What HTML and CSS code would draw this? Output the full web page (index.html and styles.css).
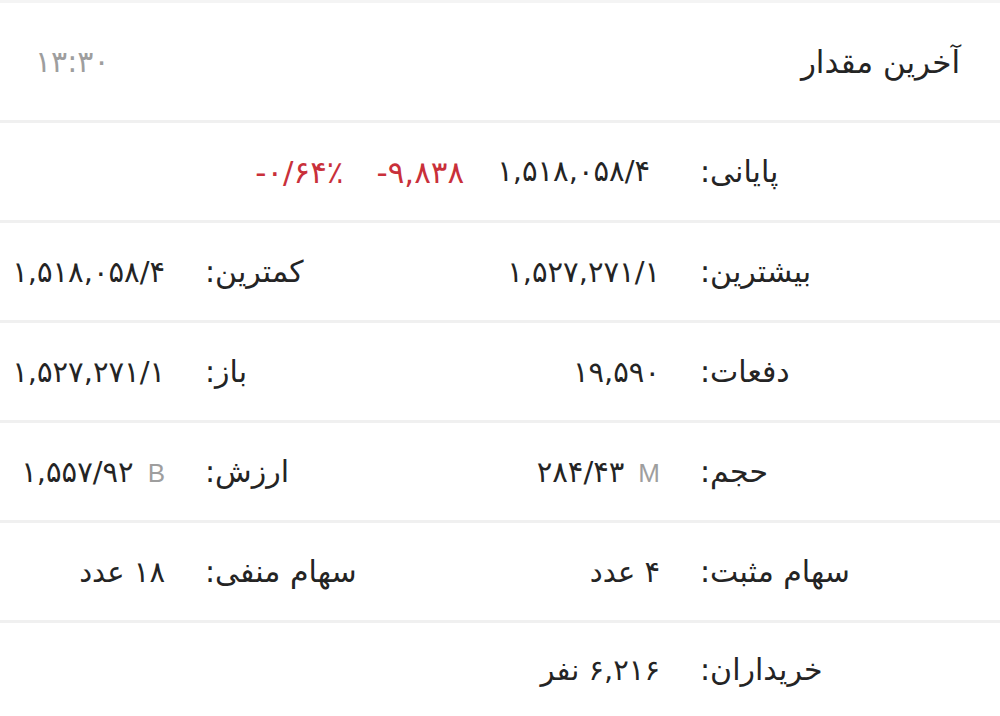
FILE: index.html
```html
<!DOCTYPE html>
<html lang="fa" dir="rtl">
<head>
<meta charset="utf-8">
<link rel="stylesheet" href="styles.css">
</head>
<body>
<div class="card">
  <div class="header">
    <span class="title">آخرین مقدار</span>
    <span class="time num">۱۳:۳۰</span>
  </div>
  <div class="row">
    <span class="label">پایانی:</span>
    <span class="value wide">
      <span class="num">۱,۵۱۸,۰۵۸/۴</span>
      <span class="num red">-۹,۸۳۸</span>
      <span class="num red">-۰/۶۴٪</span>
    </span>
  </div>
  <div class="row">
    <span class="label">بیشترین:</span>
    <span class="value"><span class="num">۱,۵۲۷,۲۷۱/۱</span></span>
    <span class="label">کمترین:</span>
    <span class="value"><span class="num">۱,۵۱۸,۰۵۸/۴</span></span>
  </div>
  <div class="row">
    <span class="label">دفعات:</span>
    <span class="value"><span class="num">۱۹,۵۹۰</span></span>
    <span class="label">باز:</span>
    <span class="value"><span class="num">۱,۵۲۷,۲۷۱/۱</span></span>
  </div>
  <div class="row">
    <span class="label">حجم:</span>
    <span class="value"><span class="num">۲۸۴/۴۳<span class="unit">M</span></span></span>
    <span class="label">ارزش:</span>
    <span class="value"><span class="num">۱,۵۵۷/۹۲<span class="unit">B</span></span></span>
  </div>
  <div class="row">
    <span class="label">سهام مثبت:</span>
    <span class="value">۴ عدد</span>
    <span class="label">سهام منفی:</span>
    <span class="value">۱۸ عدد</span>
  </div>
  <div class="row last">
    <span class="label">خریداران:</span>
    <span class="value">۶,۲۱۶ نفر</span>
  </div>
</div>
</body>
</html>
```

FILE: styles.css
```css
html, body {
  margin: 0;
  padding: 0;
  background: #ffffff;
}
body {
  font-family: "DejaVu Sans", "Noto Sans", sans-serif;
  color: #242424;
}
.card {
  width: 1000px;
  height: 716px;
  overflow: hidden;
  border-top: 3px solid #f4f4f4;
  box-sizing: border-box;
}
.header {
  height: 117px;
  display: flex;
  align-items: center;
  justify-content: space-between;
  padding: 0 40px 0 35px;
  border-bottom: 3px solid #f0f0f0;
}
.title {
  font-size: 31px;
  color: #242424;
}
.time {
  font-size: 30px;
  color: #9e9e9e;
}
.row {
  height: 97px;
  display: grid;
  grid-template-columns: 300px 200px 295px 205px;
  align-items: center;
  border-bottom: 3px solid #f0f0f0;
  font-size: 30px;
}
.row.last {
  border-bottom: none;
  height: 93px;
}
.label {
  text-align: left;
  white-space: nowrap;
}
.value {
  text-align: right;
  padding-right: 40px;
  white-space: nowrap;
  font-size: 29px;
}
.value.wide {
  grid-column: 2 / 5;
  display: flex;
  gap: 33px;
  padding-right: 50px;
}
.num {
  direction: ltr;
  unicode-bidi: isolate;
  display: inline-block;
}
.red {
  color: #c9303a;
  font-size: 31px;
}
.unit {
  color: #9e9e9e;
  font-family: "Liberation Sans", sans-serif;
  font-size: 26px;
  margin-left: 14px;
}
```
